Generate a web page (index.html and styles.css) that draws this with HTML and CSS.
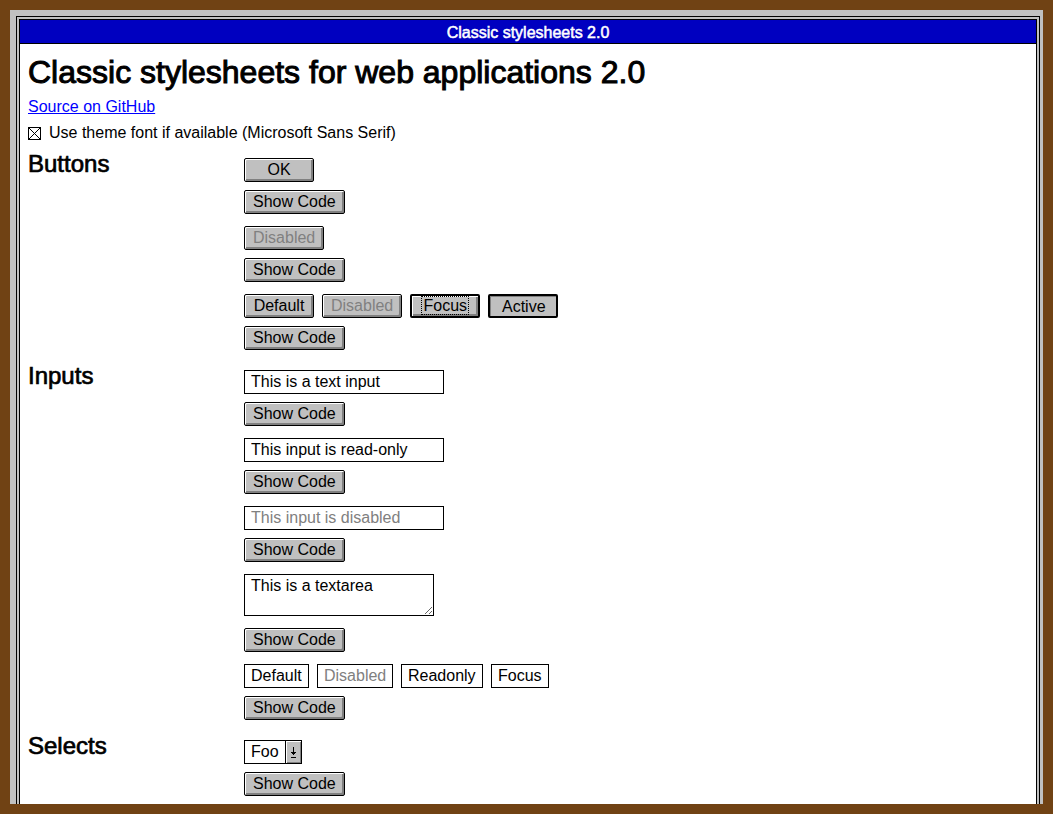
FILE: index.html
```html
<!DOCTYPE html>
<html lang="en">
<head>
<meta charset="utf-8">
<title>Classic stylesheets 2.0</title>
<link rel="stylesheet" href="styles.css">
</head>
<body>
<div class="window">
  <div class="frame">
    <div class="pane">
      <div class="titlebar">Classic stylesheets 2.0</div>
      <main class="content">
        <h1>Classic stylesheets for web applications 2.0</h1>
        <p><a href="#">Source on GitHub</a></p>
        <p class="check">
          <svg class="checkbox" width="13" height="13" viewBox="0 0 13 13" aria-hidden="true">
            <rect x="0.5" y="0.5" width="12" height="12" fill="#fff" stroke="#000"/>
            <path d="M1 1L12 12M12 1L1 12" stroke="#000" stroke-width="1"/>
          </svg>
          <span>Use theme font if available (Microsoft Sans Serif)</span>
        </p>

        <div class="sections">
          <section class="demo">
            <h2>Buttons</h2>
            <div class="groups">
              <div class="group">
                <div class="example"><button class="btn">OK</button></div>
                <button class="btn">Show Code</button>
              </div>
              <div class="group">
                <div class="example"><button class="btn" disabled>Disabled</button></div>
                <button class="btn">Show Code</button>
              </div>
              <div class="group">
                <div class="example">
                  <button class="btn">Default</button>
                  <button class="btn" disabled>Disabled</button>
                  <button class="btn is-focus"><span class="focus-ring">Focus</span></button>
                  <button class="btn is-active">Active</button>
                </div>
                <button class="btn">Show Code</button>
              </div>
            </div>
          </section>

          <section class="demo">
            <h2>Inputs</h2>
            <div class="groups">
              <div class="group">
                <div class="example"><input class="field field-wide" type="text" value="This is a text input"></div>
                <button class="btn">Show Code</button>
              </div>
              <div class="group">
                <div class="example"><input class="field field-wide" type="text" value="This input is read-only" readonly></div>
                <button class="btn">Show Code</button>
              </div>
              <div class="group">
                <div class="example"><input class="field field-wide" type="text" value="This input is disabled" disabled></div>
                <button class="btn">Show Code</button>
              </div>
              <div class="group group-tall">
                <div class="example"><textarea class="area">This is a textarea</textarea></div>
                <button class="btn">Show Code</button>
              </div>
              <div class="group">
                <div class="example">
                  <input class="field w-default" type="text" value="Default">
                  <input class="field w-disabled" type="text" value="Disabled" disabled>
                  <input class="field w-readonly" type="text" value="Readonly" readonly>
                  <input class="field w-focus" type="text" value="Focus">
                </div>
                <button class="btn">Show Code</button>
              </div>
            </div>
          </section>

          <section class="demo">
            <h2>Selects</h2>
            <div class="groups">
              <div class="group">
                <div class="example">
                  <div class="select">
                    <span class="select-value">Foo</span>
                    <span class="select-arrow">
                      <svg width="5" height="11" viewBox="0 0 5 11" aria-hidden="true">
                        <rect x="2" y="0" width="1" height="5" fill="#000"/>
                        <rect x="0" y="5" width="5" height="1" fill="#000"/>
                        <rect x="1" y="6" width="3" height="1" fill="#000"/>
                        <rect x="2" y="7" width="1" height="1" fill="#000"/>
                        <rect x="0" y="10" width="5" height="1" fill="#000"/>
                      </svg>
                    </span>
                  </div>
                </div>
                <button class="btn">Show Code</button>
              </div>
            </div>
          </section>
        </div>
      </main>
    </div>
  </div>
</div>
</body>
</html>
```

FILE: styles.css
```css
html, body {
  margin: 0;
}

body {
  padding: 10px;
  height: 100vh;
  box-sizing: border-box;
  overflow: hidden;
  background: #704214;
  font-family: "Liberation Sans", Arial, sans-serif;
  font-size: 16px;
  color: #000;
}

.window {
  height: 100%;
  box-sizing: border-box;
  overflow: hidden;
  background: #c0c0c0;
  padding: 6px 3px 0 6px;
}

.frame {
  border: 1px solid #000;
  padding: 2px;
  background: #c0c0c0;
}

.pane {
  border: 1px solid #000;
  background: #fff;
}

.titlebar {
  height: 24px;
  box-sizing: border-box;
  padding-top: 2px;
  line-height: 21px;
  background: #0000c0;
  color: #fff;
  text-align: center;
  font-size: 16px;
  border-bottom: 1px solid #000;
  -webkit-text-stroke: 0.5px #fff;
}

.content {
  padding: 10px 8px 60px;
}

h1 {
  margin: 0 0 7px;
  font-size: 32px;
  font-weight: normal;
  line-height: 37px;
  -webkit-text-stroke: 1px #000;
}

p {
  margin: 0 0 8px;
  line-height: 18px;
}

a {
  color: #0000ff;
}

.check {
  display: flex;
  align-items: center;
  gap: 8px;
}

.checkbox {
  display: block;
  flex: none;
}

.sections {
  display: flex;
  flex-direction: column;
  gap: 12px;
}

.demo {
  display: grid;
  grid-template-columns: 216px 1fr;
}

h2 {
  margin: 0;
  font-size: 24px;
  font-weight: normal;
  line-height: 28px;
  -webkit-text-stroke: 0.7px #000;
}

.groups {
  padding-top: 8px;
  display: flex;
  flex-direction: column;
  align-items: flex-start;
  gap: 12px;
}

.group {
  display: flex;
  flex-direction: column;
  align-items: flex-start;
  gap: 8px;
}

.group-tall {
  gap: 12px;
}

.example {
  display: flex;
  gap: 8px;
}

.btn {
  height: 24px;
  min-width: 70px;
  box-sizing: border-box;
  margin: 0;
  padding: 0 8px;
  font-family: "Liberation Sans", Arial, sans-serif;
  font-size: 16px;
  color: #000;
  background: #c0c0c0;
  border: 1px solid #000;
  border-radius: 2px;
  box-shadow: inset 1px 1px #fff, inset -1px -1px #808080, inset -2px -2px #808080;
  cursor: default;
}

.btn:disabled {
  color: #808080;
}

.btn.is-focus {
  border-width: 2px;
  padding: 0 6px;
}

.focus-ring {
  outline: 1px dotted #000;
  outline-offset: 0;
  padding: 0 1px;
}

.btn.is-active {
  border-width: 2px;
  padding: 1px 6px 0 7px;
  box-shadow: inset 1px 1px #808080;
}

.field {
  height: 24px;
  box-sizing: border-box;
  margin: 0;
  padding: 0 6px;
  font-family: "Liberation Sans", Arial, sans-serif;
  font-size: 16px;
  color: #000;
  background: #fff;
  border: 1px solid #000;
  border-radius: 0;
  outline: none;
}

.field:disabled {
  color: #808080;
  background: #fff;
  border-color: #000;
  opacity: 1;
}

.field-wide { width: 200px; }
.w-default { width: 65px; }
.w-disabled { width: 76px; }
.w-readonly { width: 82px; }
.w-focus { width: 58px; }

.area {
  display: block;
  width: 190px;
  height: 42px;
  box-sizing: border-box;
  margin: 0;
  padding: 2px 6px;
  font-family: "Liberation Sans", Arial, sans-serif;
  font-size: 16px;
  color: #000;
  background: #fff;
  border: 1px solid #000;
  border-radius: 0;
}

.select {
  display: inline-flex;
  height: 24px;
  box-sizing: border-box;
  border: 1px solid #000;
  background: #fff;
}

.select-value {
  padding: 0 6px;
  line-height: 22px;
}

.select-arrow {
  width: 15px;
  border-left: 1px solid #000;
  background: #c0c0c0;
  box-shadow: inset 1px 1px #fff, inset -1px -1px #808080;
  display: flex;
  align-items: center;
  justify-content: center;
}

.select-arrow svg {
  display: block;
}
```
